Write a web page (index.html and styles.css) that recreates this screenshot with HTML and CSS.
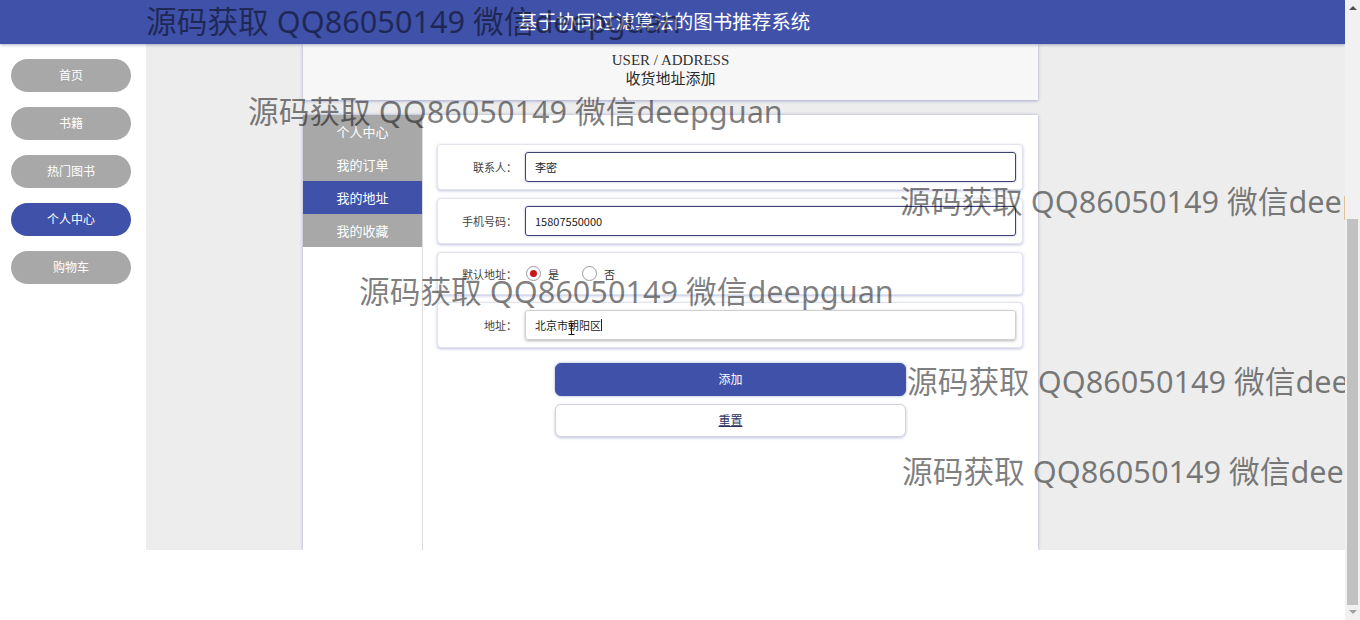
FILE: index.html
```html
<!DOCTYPE html>
<html lang="zh-CN">
<head>
<meta charset="utf-8">
<title>基于协同过滤算法的图书推荐系统</title>
<link rel="stylesheet" href="styles.css">
</head>
<body>
<div class="screen">
  <div class="page">
    <header class="topbar"><h1 class="title">基于协同过滤算法的图书推荐系统</h1></header>
    <div class="layout">
      <nav class="sidenav">
        <a class="navbtn">首页</a>
        <a class="navbtn">书籍</a>
        <a class="navbtn">热门图书</a>
        <a class="navbtn active">个人中心</a>
        <a class="navbtn">购物车</a>
      </nav>
      <main class="main">
        <div class="content">
          <div class="crumb">
            <div class="crumb-en">USER / ADDRESS</div>
            <div class="crumb-cn">收货地址添加</div>
          </div>
          <div class="panel">
            <ul class="menu">
              <li class="menu-item">个人中心</li>
              <li class="menu-item">我的订单</li>
              <li class="menu-item current">我的地址</li>
              <li class="menu-item">我的收藏</li>
            </ul>
            <div class="formwrap">
              <div class="frow">
                <label class="flabel">联系人：</label>
                <div class="finput focus">李密</div>
              </div>
              <div class="frow">
                <label class="flabel">手机号码：</label>
                <div class="finput focus">15807550000</div>
              </div>
              <div class="frow radio-row">
                <label class="flabel">默认地址：</label>
                <div class="radios">
                  <span class="radio checked"></span><span class="rtext">是</span>
                  <span class="radio"></span><span class="rtext">否</span>
                </div>
              </div>
              <div class="frow">
                <label class="flabel">地址：</label>
                <div class="finput plain">北京市朝阳区<span class="caret"></span>
                  <svg class="ibeam" width="7" height="12" viewBox="0 0 7 12"><path d="M0.5 0.5h6M3.5 0.5v11M0.5 11.5h6" stroke="#111" stroke-width="1" fill="none"/></svg>
                </div>
              </div>
              <div class="actions">
                <button class="btn primary">添加</button>
                <button class="btn ghost"><span class="u">重置</span></button>
              </div>
            </div>
          </div>
        </div>
      </main>
    </div>
  </div>
  <div class="scrollbar">
    <span class="arrow up"></span>
    <div class="track"><div class="thumb"></div></div>
    <span class="arrow down"></span>
  </div>
</div>
<div class="wm w1">源码获取 QQ86050149 微信deepguan</div>
<div class="wm w2">源码获取 QQ86050149 微信deepguan</div>
<div class="wm w3">源码获取 QQ86050149 微信deepguan</div>
<div class="wm w4">源码获取 QQ86050149 微信deepguan</div>
<div class="wm w5">源码获取 QQ86050149 微信deepguan</div>
<div class="wm w6">源码获取 QQ86050149 微信deepguan</div>
</body>
</html>
```

FILE: styles.css
```css
* { box-sizing: border-box; }
html, body { margin: 0; padding: 0; background: #fff; overflow: hidden; }
body {
  width: 1360px; height: 620px; position: relative;
  font-family: "Noto Sans CJK SC", "Noto Sans", sans-serif;
  color: #333;
}
.screen { display: flex; height: 620px; }
.page { width: 1345px; height: 550px; display: flex; flex-direction: column; overflow: hidden; }

.topbar {
  height: 44px; flex: none; background: #3f51a9;
  display: flex; align-items: center; justify-content: center;
  position: relative; z-index: 2;
  box-shadow: 0 1px 3px rgba(30,40,100,.35);
}
.title {
  margin: -2px 0 0 -17px; font-size: 19.5px; font-weight: normal; color: #fff;
  line-height: 24px; letter-spacing: 0;
}

.layout { flex: 1; display: flex; min-height: 0; }
.sidenav {
  width: 146px; flex: none; background: #fff;
  display: flex; flex-direction: column; gap: 15px;
  padding: 15px 0 0 11px;
}
.navbtn {
  width: 120px; height: 33px; border-radius: 17px;
  background: #a8a8a8; color: #fff; font-size: 12px; line-height: 14px;
  display: flex; align-items: center; justify-content: center; padding-bottom: 2px;
}
.navbtn.active { background: #3f51a9; }

.main { flex: 1; background: #ededed; padding-left: 157px; display: flex; }
.content { width: 735px; display: flex; flex-direction: column; }
.crumb {
  height: 56px; flex: none; background: #f7f7f7; text-align: center;
  padding-top: 7px;
  box-shadow: 0 1px 3px rgba(70,80,160,.45);
}
.crumb-en { font-family: "Liberation Serif", "Noto Sans CJK SC", serif; font-size: 15px; line-height: 18px; color: #333; }
.crumb-cn { font-family: "Liberation Serif", "Noto Sans CJK SC", serif; font-size: 15px; line-height: 20px; color: #2a2a2a; }

.panel {
  margin-top: 15px; flex: 1; display: flex; background: #fff;
  box-shadow: 0 0 3px rgba(70,80,160,.45);
}
.menu { list-style: none; margin: 0; padding: 0; width: 119px; flex: none; }
.menu-item {
  height: 33px; background: #a8a8a8; color: #fff; font-size: 13px;
  display: flex; align-items: center; justify-content: center; padding-bottom: 1px;
}
.menu-item.current { background: #3f51a9; }

.formwrap {
  flex: 1; border-left: 1px solid #dcdcdc;
  padding: 29px 15px 0 14px;
  display: flex; flex-direction: column; gap: 8px;
}
.frow {
  height: 46px; flex: none; background: #fff; border-radius: 4px;
  border: 1px solid #e4e4ee;
  box-shadow: 0 1px 3px rgba(70,80,160,.35);
  display: flex; align-items: center; padding-right: 6px;
}
.frow.radio-row { height: 43px; margin-bottom: -1px; }
.flabel {
  width: 79px; flex: none; text-align: right; font-size: 11px; color: #444;
  margin-right: 8px;
}
.finput {
  flex: 1; height: 30px; border-radius: 3px; font-size: 11px; color: #222;
  display: flex; align-items: center; padding-left: 9px; position: relative;
}
.finput.focus { border: 1px solid #3d4270; box-shadow: 0 0 2px rgba(60,70,160,.5); }
.finput.plain { border: 1px solid #d0d0d0; box-shadow: 0 1px 3px rgba(0,0,0,.3); }
.caret { display: inline-block; width: 1px; height: 12px; background: #222; }
.ibeam { position: absolute; left: 42px; top: 12px; }

.radios { display: flex; align-items: center; font-size: 11px; color: #333; }
.radio {
  width: 15px; height: 15px; border-radius: 50%; border: 1px solid #9a9a9a;
  background: #fff; display: inline-flex; align-items: center; justify-content: center;
  margin-left: 1px;
}
.radio.checked::after {
  content: ""; width: 7px; height: 7px; border-radius: 50%; background: #c8161d;
}
.rtext { margin: 0 22px 0 7px; }

.actions { display: flex; flex-direction: column; align-items: center; gap: 8px; margin-top: 7px; padding-left: 1px; }
.btn {
  width: 351px; height: 33px; border-radius: 6px; font-size: 12px;
  font-family: "Noto Sans CJK SC", "Noto Sans", sans-serif; cursor: pointer; padding: 0 0 2px;
}
.btn.primary { background: #3f51a9; color: #fff; border: 1px solid #3f51a9; box-shadow: 0 0 3px rgba(63,81,169,.5); }
.btn.ghost { background: #fff; color: #2c3160; border: 1px solid #d4d4dc; box-shadow: 0 1px 3px rgba(70,80,160,.35); }
.u { text-decoration: underline; }

.scrollbar {
  width: 15px; height: 620px; background: #f1f1f1; flex: none;
  display: flex; flex-direction: column; align-items: center;
  position: relative; z-index: 5;
}
.arrow { width: 0; height: 0; border-left: 4px solid transparent; border-right: 4px solid transparent; }
.arrow.up { border-bottom: 4px solid #505050; margin-top: 6px; }
.arrow.down { border-top: 4px solid #a0a0a0; margin-bottom: 6px; }
.track { flex: 1; width: 100%; padding: 0 2px; display: flex; flex-direction: column; }
.thumb { margin-top: 209px; height: 386px; background: #c1c1c1; }

.wm {
  position: absolute; z-index: 4; white-space: nowrap; pointer-events: none;
  font-family: "Noto Sans", "Noto Sans CJK SC", sans-serif;
  font-size: 30.7px; line-height: 34px; color: rgba(0,0,0,.5);
}
.w1 { left: 146px; top: 4px; }
.w2 { left: 248px; top: 94px; }
.w3 { left: 900px; top: 184px; }
.w4 { left: 359px; top: 274px; }
.w5 { left: 907px; top: 364px; }
.w6 { left: 902px; top: 454px; }
```
